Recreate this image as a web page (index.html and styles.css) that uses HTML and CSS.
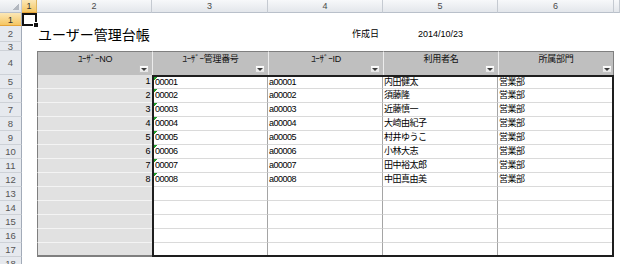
FILE: index.html
```html
<!DOCTYPE html>
<html lang="ja">
<head>
<meta charset="utf-8">
<title>ユーザー管理台帳</title>
<link rel="stylesheet" href="styles.css">
</head>
<body>
<div class="sheet">
  <div class="corner"></div>
  <div class="ch sel">1</div>
  <div class="ch">2</div>
  <div class="ch">3</div>
  <div class="ch">4</div>
  <div class="ch">5</div>
  <div class="ch">6</div>
  <div class="ch"></div>

  <div class="rh sel">1</div>
  <div class="c active"></div>
  <div class="c"></div><div class="c"></div><div class="c"></div><div class="c"></div><div class="c"></div><div class="c"></div>

  <div class="rh">2</div>
  <div class="c"></div>
  <div class="c title">ユーザー管理台帳</div>
  <div class="c"></div>
  <div class="c label">作成日</div>
  <div class="c date">2014/10/23</div>
  <div class="c"></div>
  <div class="c"></div>

  <div class="rh">3</div>
  <div class="c"></div><div class="c"></div><div class="c"></div><div class="c"></div><div class="c"></div><div class="c"></div><div class="c"></div>

  <div class="rh">4</div>
  <div class="c"></div>
  <div class="th first"><span>ﾕｰｻﾞｰNO</span><i class="flt"></i></div>
  <div class="th"><span>ﾕｰｻﾞｰ管理番号</span><i class="flt"></i></div>
  <div class="th"><span>ﾕｰｻﾞｰID</span><i class="flt"></i></div>
  <div class="th"><span>利用者名</span><i class="flt"></i></div>
  <div class="th last"><span>所属部門</span><i class="flt"></i></div>
  <div class="c"></div>

  <div class="rh">5</div><div class="c"></div><div class="no">1</div><div class="c"></div>
  <div class="rh">6</div><div class="c"></div><div class="no">2</div><div class="c"></div>
  <div class="rh">7</div><div class="c"></div><div class="no">3</div><div class="c"></div>
  <div class="rh">8</div><div class="c"></div><div class="no">4</div><div class="c"></div>
  <div class="rh">9</div><div class="c"></div><div class="no">5</div><div class="c"></div>
  <div class="rh">10</div><div class="c"></div><div class="no">6</div><div class="c"></div>
  <div class="rh">11</div><div class="c"></div><div class="no">7</div><div class="c"></div>
  <div class="rh">12</div><div class="c"></div><div class="no">8</div><div class="c"></div>
  <div class="rh">13</div><div class="c"></div><div class="no"></div><div class="c"></div>
  <div class="rh">14</div><div class="c"></div><div class="no"></div><div class="c"></div>
  <div class="rh">15</div><div class="c"></div><div class="no"></div><div class="c"></div>
  <div class="rh">16</div><div class="c"></div><div class="no"></div><div class="c"></div>
  <div class="rh">17</div><div class="c"></div><div class="no end"></div><div class="c"></div>

  <div class="rh">18</div>
  <div class="c"></div><div class="c"></div><div class="c"></div><div class="c"></div><div class="c"></div><div class="c"></div><div class="c"></div>

  <div class="data">
    <div class="code">00001</div><div>a00001</div><div>内田健太</div><div>営業部</div>
    <div class="code">00002</div><div>a00002</div><div>須藤隆</div><div>営業部</div>
    <div class="code">00003</div><div>a00003</div><div>近藤慎一</div><div>営業部</div>
    <div class="code">00004</div><div>a00004</div><div>大崎由紀子</div><div>営業部</div>
    <div class="code">00005</div><div>a00005</div><div>村井ゆうこ</div><div>営業部</div>
    <div class="code">00006</div><div>a00006</div><div>小林大志</div><div>営業部</div>
    <div class="code">00007</div><div>a00007</div><div>田中裕太郎</div><div>営業部</div>
    <div class="code">00008</div><div>a00008</div><div>中田真由美</div><div>営業部</div>
    <div></div><div></div><div></div><div></div>
    <div></div><div></div><div></div><div></div>
    <div></div><div></div><div></div><div></div>
    <div></div><div></div><div></div><div></div>
    <div></div><div></div><div></div><div></div>
  </div>
</div>
</body>
</html>
```

FILE: styles.css
```css
html, body {
  margin: 0;
  padding: 0;
  background: #fff;
}
body {
  width: 620px;
  height: 264px;
  overflow: hidden;
  font-family: "Liberation Sans", "Noto Sans CJK JP", sans-serif;
  color: #000;
}
.sheet {
  display: grid;
  grid-template-columns: 22px 15px 115px 116px 115px 115px 116px 6px;
  grid-template-rows: 13px 13px 16px 9px 24px repeat(13, 14px) 14px;
}
.sheet > div {
  box-sizing: border-box;
  min-width: 0;
}
.corner {
  background: linear-gradient(#f6f7f9, #e2e5ea);
  border-right: 1px solid #c5cad1;
  border-bottom: 1px solid #b9c0ca;
  display: flex;
  justify-content: flex-end;
  align-items: flex-end;
  padding: 0 2px 2px 0;
}
.corner::after {
  content: "";
  width: 7px;
  height: 7px;
  background: linear-gradient(135deg, transparent 50%, #b3b8c0 50%);
}
.ch {
  background: linear-gradient(#f7f8fa, #e3e6eb);
  border-right: 1px solid #c5cad1;
  border-bottom: 1px solid #b9c0ca;
  font-size: 9px;
  line-height: 12px;
  color: #4a4a4a;
  text-align: center;
}
.ch.sel {
  background: linear-gradient(#fbe7b6, #f5c662);
  border-right-color: #dcb45e;
  border-bottom-color: #e5a43a;
  color: #333;
}
.rh {
  background: #e6e9ee;
  border-right: 1px solid #a2abb8;
  border-bottom: 1px solid #cdd1d7;
  font-size: 9.5px;
  color: #555;
  display: flex;
  align-items: center;
  justify-content: center;
}
.rh.sel {
  background: linear-gradient(#fbe7b6, #f5c662);
  border-bottom-color: #e5a43a;
  color: #333;
}
.active {
  position: relative;
  border: 2px solid #111;
}
.active::after {
  content: "";
  position: absolute;
  right: -4px;
  bottom: -4px;
  width: 4px;
  height: 4px;
  background: #111;
  border: 1px solid #fff;
}
.title {
  font-family: "Noto Sans CJK JP", sans-serif;
  font-size: 14px;
  line-height: 16px;
  padding-left: 1px;
  white-space: nowrap;
}
.label,
.date {
  font-family: "Noto Sans CJK JP", sans-serif;
  font-size: 9px;
  line-height: 16px;
  white-space: nowrap;
}
.label {
  text-align: right;
  padding-right: 4px;
}
.date {
  font-family: "Liberation Sans", sans-serif;
  text-align: center;
}
.th {
  background: #bfbfbf;
  border-top: 1px solid #7f7f7f;
  border-left: 1px solid #ececec;
  display: flex;
  flex-direction: column;
  align-items: center;
  padding-top: 2px;
  font-size: 9px;
  line-height: 11px;
  letter-spacing: -0.3px;
  color: #111;
  white-space: nowrap;
}
.th.first {
  border-left-color: #7f7f7f;
}
.th.last {
  border-right: 1px solid #7f7f7f;
}
.flt {
  margin: auto 3px 2px auto;
  width: 10px;
  height: 10px;
  box-sizing: border-box;
  border: 1px solid #c2c2c2;
  background: linear-gradient(#fdfdfd, #e6e6e6);
  display: flex;
  align-items: center;
  justify-content: center;
}
.th.last .flt {
  margin-right: 1px;
}
.flt::after {
  content: "";
  border-left: 3px solid transparent;
  border-right: 3px solid transparent;
  border-top: 3px solid #3c3c3c;
}
.no {
  background: #e1e1e1;
  border-left: 1px solid #7f7f7f;
  border-bottom: 1px solid #f4f4f4;
  font-size: 9px;
  line-height: 13px;
  text-align: right;
  padding-right: 2px;
  letter-spacing: -0.5px;
}
.no.end {
  border-bottom: 2px solid #7f7f7f;
}
.data {
  grid-column: 4 / 8;
  grid-row: 6 / 19;
  border: 2px solid #1e1e1e;
  display: grid;
  grid-template-columns: 114px 115px 115px 114px;
  grid-template-rows: 12px repeat(11, 14px) 12px;
}
.data > div {
  box-sizing: border-box;
  min-width: 0;
  border-right: 1px solid #a5a5a5;
  border-bottom: 1px solid #dadada;
  font-size: 9px;
  line-height: 13px;
  padding-left: 1px;
  white-space: nowrap;
  overflow: hidden;
  letter-spacing: -0.5px;
}
.data > div:nth-child(-n+4) {
  line-height: 11px;
}
.data > div:nth-child(4n) {
  border-right: 0;
}
.data > div:nth-last-child(-n+4) {
  border-bottom: 0;
}
.data > .code {
  background: linear-gradient(135deg, #1f9d2c 2.5px, transparent 2.5px) 0 0 / 5px 5px no-repeat;
}
```
